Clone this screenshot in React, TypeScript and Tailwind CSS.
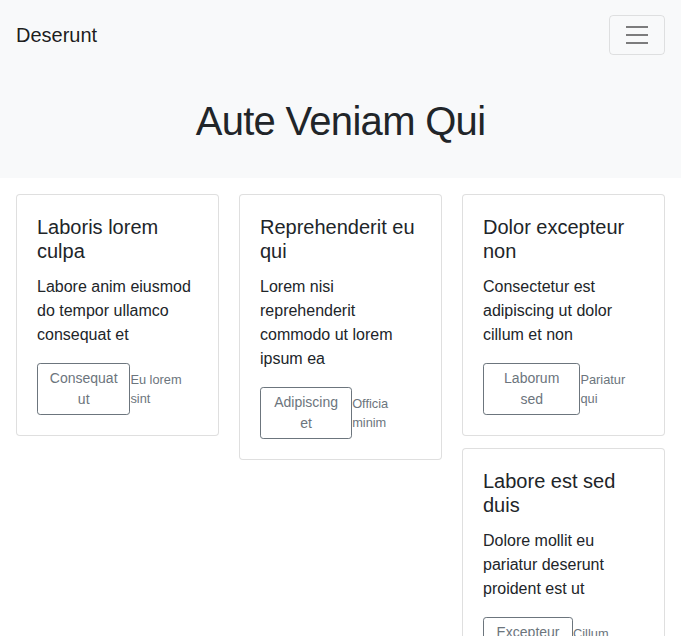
type Card = {
  title: string;
  text: string;
  action: string;
  note: string;
};

const columns: Card[][] = [
  [
    {
      title: "Laboris lorem culpa",
      text: "Labore anim eiusmod do tempor ullamco consequat et",
      action: "Consequat ut",
      note: "Eu lorem sint",
    },
  ],
  [
    {
      title: "Reprehenderit eu qui",
      text: "Lorem nisi reprehenderit commodo ut lorem ipsum ea",
      action: "Adipiscing et",
      note: "Officia minim",
    },
  ],
  [
    {
      title: "Dolor excepteur non",
      text: "Consectetur est adipiscing ut dolor cillum et non",
      action: "Laborum sed",
      note: "Pariatur qui",
    },
    {
      title: "Labore est sed duis",
      text: "Dolore mollit eu pariatur deserunt proident est ut",
      action: "Excepteur sint",
      note: "Cillum eiusmod",
    },
  ],
];

export default function App() {
  return (
    <div className="min-h-screen bg-white font-['Liberation_Sans',Arial,sans-serif] text-[#212529]">
      <header className="bg-[#f8f9fa]">
        <nav className="flex items-center justify-between px-4 py-[15px]">
          <a href="#" className="text-[20px] leading-[30px] text-[rgba(0,0,0,0.9)]">
            Deserunt
          </a>
          <button
            type="button"
            aria-label="Toggle navigation"
            className="flex h-[40px] w-[56px] items-center justify-center rounded-[4px] border border-[rgba(0,0,0,0.1)]"
          >
            <svg viewBox="0 0 30 30" className="h-[30px] w-[30px]" aria-hidden="true">
              <path
                d="M4 7h22M4 15h22M4 23h22"
                stroke="rgba(0,0,0,0.5)"
                strokeWidth="2"
                strokeMiterlimit="10"
              />
            </svg>
          </button>
        </nav>
        <div className="pb-[33px] pt-[27px] text-center">
          <h1 className="text-[40px] font-medium leading-[48px] tracking-[-0.7px]">
            Aute Veniam Qui
          </h1>
        </div>
      </header>

      <main className="flex items-start gap-5 px-4 pt-4">
        {columns.map((col, i) => (
          <div key={i} className="flex min-w-0 flex-1 flex-col gap-3">
            {col.map((card) => (
              <CardBox key={card.title} card={card} />
            ))}
          </div>
        ))}
      </main>
    </div>
  );
}

function CardBox({ card }: { card: Card }) {
  return (
    <div className="rounded-[4px] border border-[rgba(0,0,0,0.125)] bg-white p-5">
      <h5 className="mb-3 text-[20px] font-medium leading-[24px]">{card.title}</h5>
      <p className="mb-4 text-[16px] leading-[24px]">{card.text}</p>
      <div className="flex items-center justify-between">
        <button
          type="button"
          className="rounded-[3.2px] border border-[#6c757d] px-2 py-1 text-center text-[14px] leading-[21px] text-[#6c757d]"
        >
          {card.action}
        </button>
        <small className="text-[12.8px] leading-[19.2px] text-[#6c757d]">{card.note}</small>
      </div>
    </div>
  );
}
